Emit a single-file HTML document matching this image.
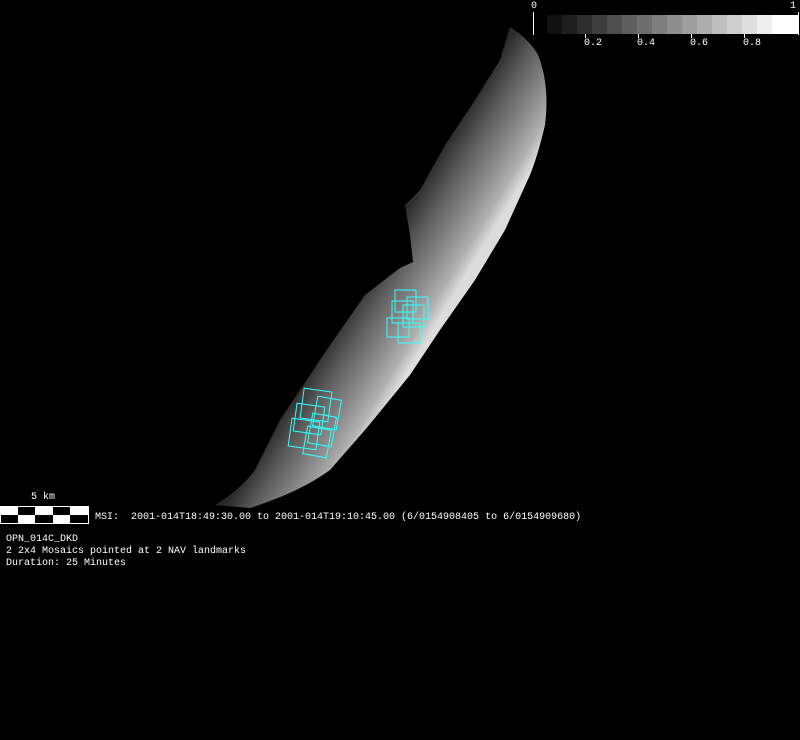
<!DOCTYPE html>
<html><head><style>
html,body{margin:0;padding:0;background:#000;}
body{width:800px;height:740px;position:relative;overflow:hidden;font-family:"Liberation Mono",monospace;color:#fff;}
.t{position:absolute;font-size:10px;line-height:12px;white-space:pre;}
</style></head><body>
<svg width="800" height="740" style="position:absolute;left:0;top:0">
<defs>
<linearGradient id="g" gradientUnits="userSpaceOnUse" x1="368" y1="270" x2="442" y2="315">
<stop offset="0" stop-color="#2a2a2a"/>
<stop offset="0.3" stop-color="#5e5e5e"/>
<stop offset="0.6" stop-color="#888"/>
<stop offset="0.85" stop-color="#b0b0b0"/>
<stop offset="1" stop-color="#dcdcdc"/>
</linearGradient>
</defs>
<path d="M510,27 Q530,40 538,55 Q550,85 545,125 Q538,155 530,175 L505,230 L475,280 L440,330 L410,375 L365,430 L330,470 Q300,492 250,508 L215,505 Q240,490 255,470 L280,420 L300,390 L330,345 L365,295 L400,268 L413,262 L410,235 L405,205 L420,190 L445,145 L475,100 L500,60 Z" fill="url(#g)"/>
<g fill="none" stroke="#3ff" stroke-width="1">
<rect x="395" y="290" width="21" height="22"/>
<rect x="407" y="297" width="21" height="22"/>
<rect x="392" y="301" width="21" height="22"/>
<rect x="403" y="305" width="21" height="22"/>
<rect x="387" y="318" width="22" height="19"/>
<rect x="398" y="323" width="22" height="20"/>
<rect x="302" y="390" width="28" height="30" transform="rotate(8 316 405)"/>
<rect x="295" y="405" width="28" height="28" transform="rotate(8 309 419)"/>
<rect x="290" y="420" width="28" height="28" transform="rotate(8 304 434)"/>
<rect x="315" y="398" width="24" height="30" transform="rotate(10 327 413)"/>
<rect x="310" y="415" width="24" height="30" transform="rotate(10 322 430)"/>
<rect x="305" y="428" width="24" height="28" transform="rotate(10 317 442)"/>
</g>
<g>
<rect x="547" y="15" width="16" height="19" fill="#111"/><rect x="562" y="15" width="16" height="19" fill="#1e1e1e"/>
<rect x="577" y="15" width="16" height="19" fill="#2e2e2e"/><rect x="592" y="15" width="16" height="19" fill="#3e3e3e"/>
<rect x="607" y="15" width="16" height="19" fill="#4e4e4e"/><rect x="622" y="15" width="16" height="19" fill="#5e5e5e"/>
<rect x="637" y="15" width="16" height="19" fill="#6e6e6e"/><rect x="652" y="15" width="16" height="19" fill="#7e7e7e"/>
<rect x="667" y="15" width="16" height="19" fill="#8e8e8e"/><rect x="682" y="15" width="16" height="19" fill="#9e9e9e"/>
<rect x="697" y="15" width="16" height="19" fill="#aeaeae"/><rect x="712" y="15" width="16" height="19" fill="#bebebe"/>
<rect x="727" y="15" width="16" height="19" fill="#cecece"/><rect x="742" y="15" width="16" height="19" fill="#dedede"/>
<rect x="757" y="15" width="16" height="19" fill="#eee"/><rect x="772" y="15" width="26" height="19" fill="#fff"/>
</g>
<g stroke="#fff" stroke-width="1">
<line x1="533.5" y1="12" x2="533.5" y2="35"/><line x1="798.5" y1="12" x2="798.5" y2="35"/>
<line x1="585.5" y1="34" x2="585.5" y2="38"/><line x1="638.5" y1="34" x2="638.5" y2="38"/>
<line x1="691.5" y1="34" x2="691.5" y2="38"/><line x1="744.5" y1="34" x2="744.5" y2="38"/>
</g>
<rect x="0.5" y="506.5" width="88" height="17" fill="#fff" stroke="#fff"/>
<g fill="#000">
<rect x="18" y="507" width="17" height="8"/><rect x="53" y="507" width="17" height="8"/>
<rect x="1" y="515" width="17" height="8"/><rect x="35" y="515" width="18" height="8"/><rect x="70" y="515" width="18" height="8"/>
</g>
</svg>
<div class="t" style="left:531px;top:1px">0</div>
<div class="t" style="left:790px;top:1px">1</div>
<div class="t" style="left:584px;top:38px">0.2</div>
<div class="t" style="left:637px;top:38px">0.4</div>
<div class="t" style="left:690px;top:38px">0.6</div>
<div class="t" style="left:743px;top:38px">0.8</div>
<div class="t" style="left:31px;top:492px">5 km</div>
<div class="t" style="left:95px;top:512px">MSI:  2001-014T18:49:30.00 to 2001-014T19:10:45.00 (6/0154908405 to 6/0154909680)</div>
<div class="t" style="left:6px;top:534px">OPN_014C_DKD
2 2x4 Mosaics pointed at 2 NAV landmarks
Duration: 25 Minutes</div>
</body></html>
